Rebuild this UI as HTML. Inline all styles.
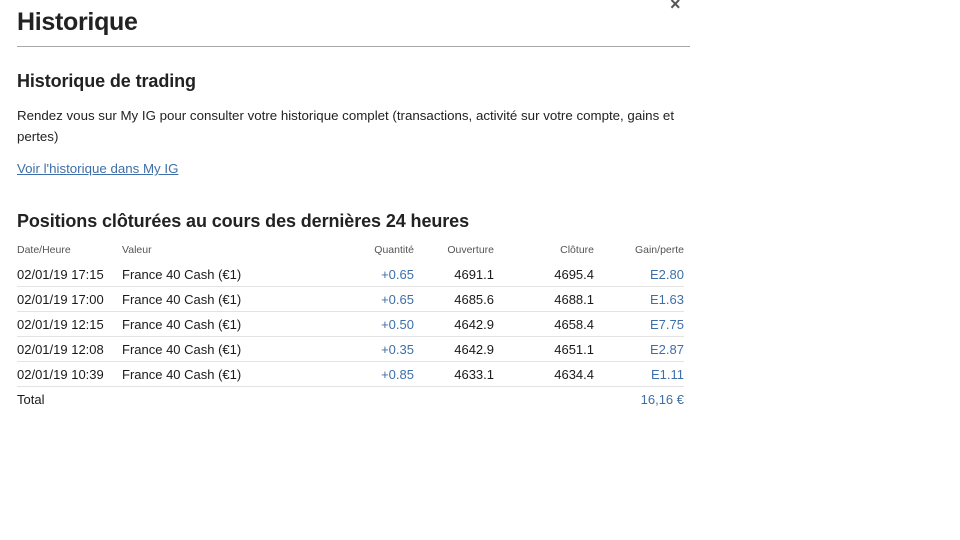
<!DOCTYPE html>
<html><head><meta charset="utf-8"><style>
body{margin:0;width:960px;height:540px;background:#fff;font-family:"Liberation Sans",sans-serif;color:#1a1a1a;position:relative;overflow:hidden}
.a{position:absolute;white-space:nowrap}
h1{position:absolute;left:17px;top:8px;margin:0;font-size:25px;font-weight:bold;letter-spacing:-0.3px;color:#222}
.hr{position:absolute;left:17px;top:46px;width:673px;height:1px;background:#a8a8a8}
h2{position:absolute;left:17px;margin:0;font-size:18px;font-weight:bold;color:#222;letter-spacing:-0.1px}
p{position:absolute;left:17px;margin:0;font-size:13.3px;line-height:21px;width:672px;color:#222}
.link{color:#3f6fa8;text-decoration:underline}
table{position:absolute;left:17px;top:238px;width:667px;border-collapse:collapse;font-size:13px}
td{height:24px;padding:0;border-bottom:1px solid #e3e3e3;white-space:nowrap}
tr.h td{font-size:10.5px;color:#555;height:24px;border:none}
td.r{text-align:right}
.b{color:#3f6fa8}
tr.t td{border:none}
</style></head><body>
<div class="a" style="left:670px;top:-6px;font-size:18px;font-weight:bold;color:#555">×</div>
<h1>Historique</h1>
<div class="hr"></div>
<h2 style="top:71px">Historique de trading</h2>
<p style="top:105px">Rendez vous sur My IG pour consulter votre historique complet (transactions, activité sur votre compte, gains et pertes)</p>
<p style="top:158px"><span class="link">Voir l'historique dans My IG</span></p>
<h2 style="top:211px">Positions clôturées au cours des dernières 24 heures</h2>
<table>
<tr class="h"><td style="width:105px">Date/Heure</td><td>Valeur</td><td class="r">Quantité</td><td class="r" style="width:80px">Ouverture</td><td class="r" style="width:100px">Clôture</td><td class="r" style="width:90px">Gain/perte</td></tr>
<tr><td>02/01/19 17:15</td><td>France 40 Cash (€1)</td><td class="r b">+0.65</td><td class="r">4691.1</td><td class="r">4695.4</td><td class="r b">E2.80</td></tr>
<tr><td>02/01/19 17:00</td><td>France 40 Cash (€1)</td><td class="r b">+0.65</td><td class="r">4685.6</td><td class="r">4688.1</td><td class="r b">E1.63</td></tr>
<tr><td>02/01/19 12:15</td><td>France 40 Cash (€1)</td><td class="r b">+0.50</td><td class="r">4642.9</td><td class="r">4658.4</td><td class="r b">E7.75</td></tr>
<tr><td>02/01/19 12:08</td><td>France 40 Cash (€1)</td><td class="r b">+0.35</td><td class="r">4642.9</td><td class="r">4651.1</td><td class="r b">E2.87</td></tr>
<tr><td>02/01/19 10:39</td><td>France 40 Cash (€1)</td><td class="r b">+0.85</td><td class="r">4633.1</td><td class="r">4634.4</td><td class="r b">E1.11</td></tr>
<tr class="t"><td>Total</td><td></td><td></td><td></td><td></td><td class="r b">16,16 €</td></tr>
</table>
</body></html>
